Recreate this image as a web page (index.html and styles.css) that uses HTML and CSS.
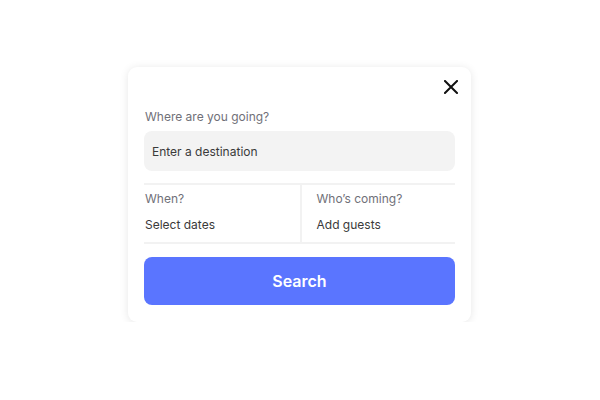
FILE: index.html
```html
<!DOCTYPE html>
<html lang="en">
<head>
    <meta charset="UTF-8">
    <meta name="viewport" content="width=device-width, initial-scale=1.0">
    <title>Search</title>
    <link rel="stylesheet" href="styles.css">
</head>
<body>
    <div class="search-card">
        <div class="card-top">
            <button class="close-btn" aria-label="Close">
                <svg width="14" height="14" viewBox="0 0 14 14">
                    <path d="M1 1 L13 13 M13 1 L1 13" stroke="#111" stroke-width="2" stroke-linecap="square"/>
                </svg>
            </button>
        </div>
        <label class="field-label" for="destination">Where are you going?</label>
        <input type="text" id="destination" class="destination" placeholder="Enter a destination">
        <div class="options">
            <div class="option">
                <span class="field-label">When?</span>
                <span class="option-value">Select dates</span>
            </div>
            <div class="option">
                <span class="field-label">Who’s coming?</span>
                <span class="option-value">Add guests</span>
            </div>
        </div>
        <button class="search-btn">Search</button>
    </div>
</body>
</html>
```

FILE: styles.css
```css
body {
    margin: 0;
    font-family: Inter, "Noto Sans", sans-serif;
    background: #fff;
    padding-top: 67px;
}
.search-card {
    width: 343px;
    box-sizing: border-box;
    margin-left: 128px;
    padding: 10px 16px 17px;
    background: #fff;
    border-radius: 9px;
    box-shadow: 0 1px 8px rgba(0, 0, 0, 0.1);
    display: flex;
    flex-direction: column;
}
.card-top {
    display: flex;
    justify-content: flex-end;
    height: 20px;
    margin-right: -6px;
}
.close-btn {
    width: 20px;
    height: 20px;
    padding: 0;
    border: none;
    background: none;
    display: flex;
    align-items: center;
    justify-content: center;
    cursor: pointer;
}
.field-label {
    display: block;
    font-size: 12px;
    line-height: 16px;
    color: #707078;
    padding-left: 1px;
}
.search-card > .field-label {
    margin-top: 12px;
}
.destination {
    margin-top: 6px;
    height: 40px;
    box-sizing: border-box;
    border: none;
    border-radius: 8px;
    background: #f3f3f3;
    padding: 0 8px;
    font-family: inherit;
    font-size: 12px;
    color: #3a3a3a;
    outline: none;
}
.destination::placeholder {
    color: #3a3a3a;
}
.options {
    margin-top: 12px;
    display: grid;
    grid-template-columns: 1fr 1fr;
    border-top: 2px solid #f2f2f2;
    border-bottom: 2px solid #f2f2f2;
}
.option {
    display: flex;
    flex-direction: column;
    gap: 10px;
    padding: 6px 0 9px;
}
.option + .option {
    border-left: 2px solid #f2f2f2;
    padding-left: 14px;
}
.option-value {
    font-size: 12px;
    line-height: 16px;
    color: #3a3a3a;
    padding-left: 1px;
}
.search-btn {
    margin-top: 13px;
    height: 48px;
    border: none;
    border-radius: 8px;
    background: #5a75ff;
    color: #fff;
    font-family: inherit;
    font-size: 16px;
    font-weight: 600;
    cursor: pointer;
}
```
